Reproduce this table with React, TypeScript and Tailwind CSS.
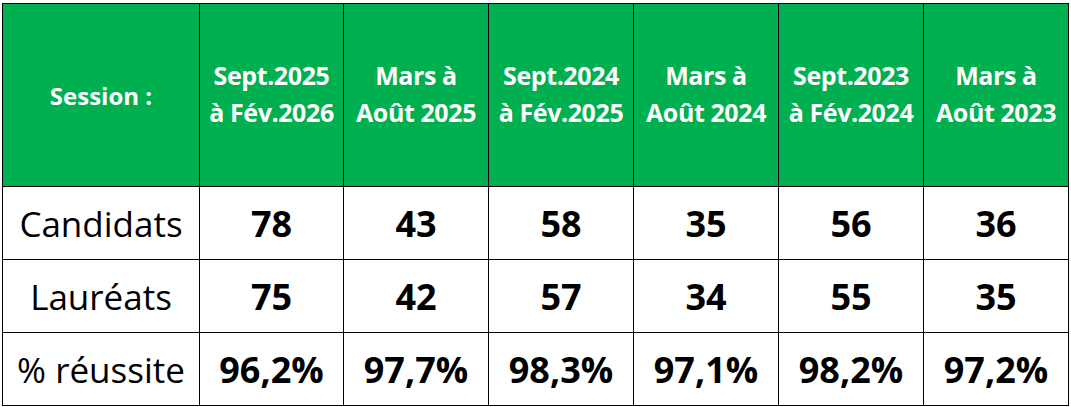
import React from "react"

const sessions = [
  ["Sept.2025", "à Fév.2026"],
  ["Mars à", "Août 2025"],
  ["Sept.2024", "à Fév.2025"],
  ["Mars à", "Août 2024"],
  ["Sept.2023", "à Fév.2024"],
  ["Mars à", "Août 2023"],
]

const rows = [
  { label: "Candidats", values: ["78", "43", "58", "35", "56", "36"] },
  { label: "Lauréats", values: ["75", "42", "57", "34", "55", "35"] },
  { label: "% réussite", values: ["96,2%", "97,7%", "98,3%", "97,1%", "98,2%", "97,2%"] },
]

export default function App() {
  return (
    <div className="w-[1071px] h-[407px] bg-white pt-[3px] pl-[2px] font-['Open_Sans',sans-serif]">
      <table className="table-fixed border-collapse w-[1066px]">
        <colgroup>
          <col className="w-[197px]" />
          <col className="w-[144px]" />
          <col className="w-[145px]" />
          <col className="w-[145px]" />
          <col className="w-[145px]" />
          <col className="w-[145px]" />
          <col className="w-[145px]" />
        </colgroup>
        <thead>
          {/* Header */}
          <tr className="h-[183px] bg-[#00b050] text-white font-bold">
            <th className="border border-black text-[24px] text-center align-middle pt-[2px]">
              Session :
            </th>
            {sessions.map((s, i) => (
              <th
                key={i}
                className="border border-black text-[25px] leading-[37px] text-center align-middle whitespace-nowrap tracking-[-0.4px] pb-[2px]"
              >
                {s[0]}
                <br />
                {s[1]}
              </th>
            ))}
          </tr>
        </thead>
        <tbody>
          {rows.map((r) => (
            <tr key={r.label} className="h-[73px]">
              <td className="border border-black text-center text-[35px] text-black align-middle pt-[2px]">
                {r.label}
              </td>
              {r.values.map((v, i) => (
                <td
                  key={i}
                  className="border border-black text-center text-[36px] font-bold text-black align-middle pt-[2px]"
                >
                  {v}
                </td>
              ))}
            </tr>
          ))}
        </tbody>
      </table>
    </div>
  )
}
